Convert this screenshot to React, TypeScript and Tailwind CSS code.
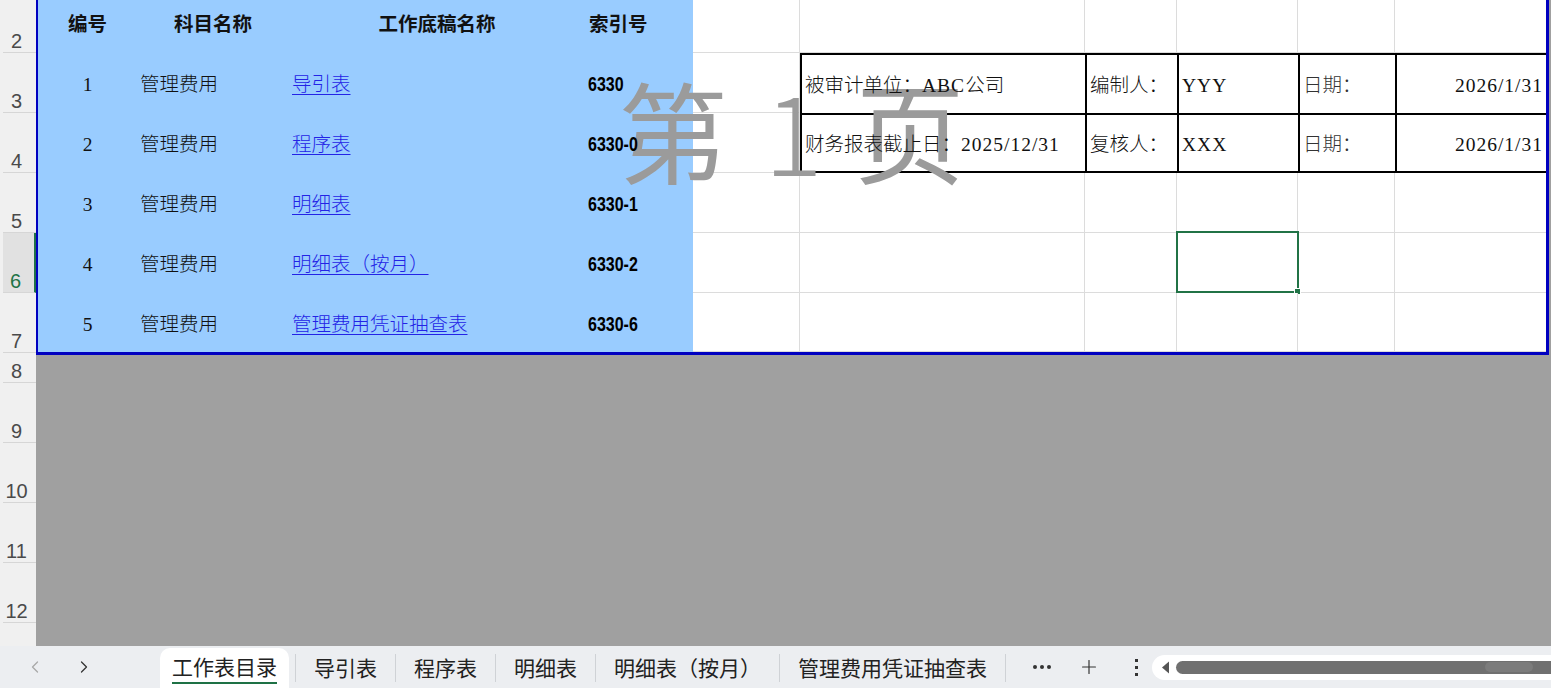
import { ChevronLeft, ChevronRight, Plus } from "lucide-react";

const rowHeads = [
    { n: "2", h: "h-[53px]" },
    { n: "3", h: "h-[60px]" },
    { n: "4", h: "h-[60px]" },
    { n: "5", h: "h-[60px]" },
    { n: "6", h: "h-[60px]", active: true },
    { n: "7", h: "h-[60px]" },
    { n: "8", h: "h-[30px]" },
    { n: "9", h: "h-[60px]" },
    { n: "10", h: "h-[60px]" },
    { n: "11", h: "h-[60px]" },
    { n: "12", h: "h-[60px]" },
];

const items = [
    { no: "1", subject: "管理费用", name: "导引表", idx: "6330" },
    { no: "2", subject: "管理费用", name: "程序表", idx: "6330-0" },
    { no: "3", subject: "管理费用", name: "明细表", idx: "6330-1" },
    { no: "4", subject: "管理费用", name: "明细表（按月）", idx: "6330-2" },
    { no: "5", subject: "管理费用", name: "管理费用凭证抽查表", idx: "6330-6" },
];

const tabs = ["导引表", "程序表", "明细表", "明细表（按月）", "管理费用凭证抽查表"];

const serif = "font-['Liberation_Serif','Noto_Sans_CJK_SC',serif] text-[19.5px] text-[#111] font-light";
const blue = "bg-[#99ccff] flex items-center";
const grid = "bg-white border-b border-r border-[#dcdcdc]";
const gridLast = "bg-white border-b border-[#dcdcdc]";
const boxed = "bg-white border-l-2 border-t-2 border-black flex items-center px-[3px] pt-[3px]";

function RowHeader() {
    return (
        <div className="w-[36px] shrink-0 bg-[#f0f0f0] flex flex-col font-['Liberation_Sans',sans-serif] text-[20px] leading-[22px] text-[#4a4a4a]">
            {rowHeads.map(r => (
                <div
                    key={r.n}
                    className={`${r.h} shrink-0 flex items-end justify-center pr-[6px] border-b border-[#d6d6d6] ml-[3px] ${
                        r.active ? "bg-[#e1e1e1] text-[#217346] border-r-2 border-r-[#217346]" : ""
                    }`}
                >
                    {r.n}
                </div>
            ))}
            <div className="flex-1" />
        </div>
    );
}

function WhiteTail({ row }: { row: number }) {
    // columns E..J for rows outside the header table
    return (
        <>
            <div className={grid} />
            <div className={grid} />
            <div className={grid} />
            <div className={`${grid} relative`}>
                {row === 6 && (
                    <div className="absolute -left-px -top-[2px] w-[123px] h-[62px] border-2 border-[#217346]">
                        <div className="absolute -right-[4px] -bottom-[4px] w-[7px] h-[7px] bg-[#217346] border border-white" />
                    </div>
                )}
            </div>
            <div className={grid} />
            <div className={gridLast} />
        </>
    );
}

function Sheet() {
    return (
        <div className="relative isolate mt-[-7px] w-[1513px] border-l-2 border-r-[3px] border-b-[3px] border-[#0000c0] grid grid-cols-[99px_152px_296px_108px_107px_285px_92px_121px_97px_151px] grid-rows-[60px_60px_60px_60px_60px_59px]">
            {/* row 2 header */}
            <div className={`${blue} justify-center pt-[4px] ${serif} !font-bold`}>编号</div>
            <div className={`${blue} justify-center pt-[4px] ${serif} !font-bold`}>科目名称</div>
            <div className={`${blue} justify-center pt-[4px] ${serif} !font-bold`}>工作底稿名称</div>
            <div className={`${blue} pl-[4px] pt-[4px] ${serif} !font-bold`}>索引号</div>
            <WhiteTail row={2} />

            {items.map((it, i) => (
                <div key={it.no} className="contents">
                    <div className={`${blue} justify-center pt-[4px] ${serif}`}>
                        <span className="relative z-[2]">{it.no}</span>
                    </div>
                    <div className={`${blue} pl-[3px] pt-[4px] ${serif}`}>
                        <span className="relative z-[2]">{it.subject}</span>
                    </div>
                    <div className={`${blue} pl-[3px] pt-[4px] ${serif}`}>
                        <a className="relative z-[2] text-[#2323e6] underline underline-offset-[3px] decoration-1">{it.name}</a>
                    </div>
                    <div className={`${blue} pl-[3px] pt-[2px] font-['Liberation_Sans',sans-serif] font-bold text-[20px] text-black`}>
                        <span className="relative z-[2] inline-block origin-left scale-x-[0.8]">{it.idx}</span>
                    </div>
                    {i === 0 && (
                        <>
                            <div className={grid} />
                            <div className={`${boxed} ${serif}`}><span className="relative z-[2]">被审计单位：<span className="tracking-[1px]">ABC</span>公司</span></div>
                            <div className={`${boxed} ${serif}`}><span className="relative z-[2]">编制人：</span></div>
                            <div className={`${boxed} ${serif}`}><span className="relative z-[2] tracking-[1px]">YYY</span></div>
                            <div className={`${boxed} ${serif} !text-[#333]`}><span className="relative z-[2]">日期：</span></div>
                            <div className={`${boxed} ${serif} justify-end`}><span className="relative z-[2] tracking-[1px]">2026/1/31</span></div>
                        </>
                    )}
                    {i === 1 && (
                        <>
                            <div className={grid} />
                            <div className={`${boxed} border-b-2 ${serif}`}><span className="relative z-[2]">财务报表截止日：<span className="tracking-[1px]">2025/12/31</span></span></div>
                            <div className={`${boxed} border-b-2 ${serif}`}><span className="relative z-[2]">复核人：</span></div>
                            <div className={`${boxed} border-b-2 ${serif}`}><span className="relative z-[2] tracking-[1px]">XXX</span></div>
                            <div className={`${boxed} border-b-2 ${serif} !text-[#333]`}><span className="relative z-[2]">日期：</span></div>
                            <div className={`${boxed} border-b-2 ${serif} justify-end`}><span className="relative z-[2] tracking-[1px]">2026/1/31</span></div>
                        </>
                    )}
                    {i > 1 && <WhiteTail row={i + 3} />}
                </div>
            ))}

            {/* page watermark */}
            <div className="absolute left-[580px] top-[80px] z-[1] pointer-events-none flex font-['Noto_Sans_CJK_SC',sans-serif] text-[110px] leading-none text-[#9b9b9b]">
                <span>第</span>
                <span className="ml-[36px] font-light">1</span>
                <span className="ml-[32px]">页</span>
            </div>
        </div>
    );
}

function TabBar() {
    return (
        <div className="h-[42px] shrink-0 bg-[#eceef1] flex items-center font-['Noto_Sans_CJK_SC',sans-serif] text-[21px] text-[#222]">
            <div className="w-[160px] h-full flex items-center">
                <ChevronLeft className="ml-[25px] text-[#a8a8a8]" size={20} strokeWidth={1.5} />
                <ChevronRight className="ml-[29px] text-[#333]" size={20} strokeWidth={1.5} />
            </div>
            <div className="self-end w-[129px] h-[40px] bg-white rounded-t-[10px] flex flex-col items-center pt-[3px]">
                <span className="leading-[30px]">工作表目录</span>
                <div className="w-[105px] h-[2px] bg-[#1e7145] mt-[1px]" />
            </div>
            <div className="flex items-center ml-[6px] pt-[2px]">
                {tabs.map(t => (
                    <div key={t} className="flex items-center">
                        <div className="w-px h-[28px] bg-[#cfd2d6]" />
                        <span className="px-[18px] whitespace-nowrap">{t}</span>
                    </div>
                ))}
                <div className="w-px h-[28px] bg-[#cfd2d6]" />
            </div>
            <div className="w-[70px] flex items-center justify-center gap-[3px] ml-[1px]">
                <span className="w-[4px] h-[4px] rounded-full bg-[#333]" />
                <span className="w-[4px] h-[4px] rounded-full bg-[#333]" />
                <span className="w-[4px] h-[4px] rounded-full bg-[#333]" />
            </div>
            <Plus className="ml-[1px] text-[#333]" size={22} strokeWidth={1.3} />
            <div className="ml-[35px] flex flex-col gap-[4px]">
                <span className="w-[3px] h-[3px] bg-[#333]" />
                <span className="w-[3px] h-[3px] bg-[#333]" />
                <span className="w-[3px] h-[3px] bg-[#333]" />
            </div>
            <div className="ml-[14px] flex-1 h-[25px] bg-white rounded-l-full flex items-center pl-[9px]">
                <svg width="9" height="13" viewBox="0 0 9 13" className="shrink-0">
                    <path d="M8 0.5 L1 6.5 L8 12.5 Z" fill="#555" />
                </svg>
                <div className="ml-[6px] flex-1 h-[13px] bg-[#707070] rounded-l-full flex items-center justify-end pr-[18px]">
                    <span className="w-[48px] h-[10px] rounded-full bg-[#7c7c7c]" />
                </div>
            </div>
        </div>
    );
}

export default function App() {
    return (
        <div className="w-[1551px] h-[688px] overflow-hidden flex flex-col bg-[#a0a0a0]">
            <div className="h-[646px] flex overflow-hidden">
                <RowHeader />
                <div className="flex-1 bg-[#a0a0a0] overflow-hidden">
                    <Sheet />
                </div>
            </div>
            <TabBar />
        </div>
    );
}
